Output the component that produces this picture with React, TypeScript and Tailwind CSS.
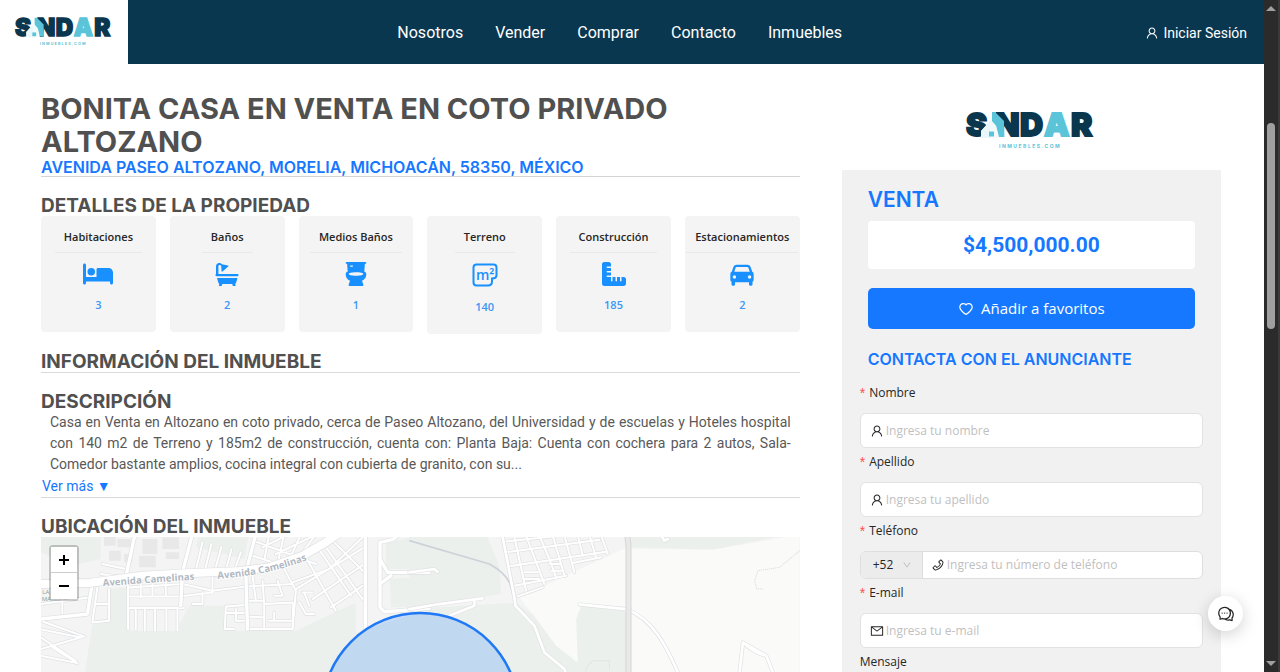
import type { ReactNode } from "react";
import { AiOutlineUser, AiOutlinePhone, AiOutlineMail, AiOutlineHeart, AiOutlineComment, AiOutlineDown } from "react-icons/ai";
import { FaBed, FaRulerCombined } from "react-icons/fa6";
import { BiSolidCar } from "react-icons/bi";

const heading = "font-['Inter',sans-serif] font-bold uppercase text-[#505050]";

function Logo({ className }: { className: string }) {
  return (
    <svg viewBox="0 0 130 40" className={className} role="img" aria-label="Sindar Inmuebles.com">
      <g fontFamily="Inter, sans-serif" fontWeight="900" fontSize="32" fill="#0a364e" stroke="#0a364e" strokeWidth="1.8">
        <text x="0" y="25">S</text>
        <text x="29" y="25">N</text>
        <text x="54" y="25">D</text>
        <text x="78" y="25" fill="#5bc4d8" stroke="#5bc4d8">A</text>
        <text x="105" y="25">R</text>
      </g>
      <path d="M26 1 L29 1 L38 10 V26 L26 13 Z" fill="#5bc4d8" />
      <path d="M15 20 L25 9 L33 18 V27 H15 Z" fill="#f4fafc" />
      <path d="M15 20 L24 10 V27 H15 Z" fill="#e9f6fa" />
      <path d="M30 14 L38 20 V26 H33 Z" fill="#5bc4d8" />
      <rect x="23" y="20.500" width="5" height="5" fill="#5bc4d8" />
      <text x="33" y="37" fontFamily="Inter, sans-serif" fontWeight="700" fontSize="5" letterSpacing="1.5" fill="#5bc4d8">INMUEBLES.COM</text>
    </svg>
  );
}

function BathIcon() {
  return (
    <svg viewBox="0 0 24 24" className="size-6" fill="currentColor">
      <path d="M1 12V4.500C1 2.500 2.300 1 4.200 1c1.200 0 2 .5 2.600 1.300L13 3.500c.5.200.6.700.2 1L7.500 9.500c-.5.300-1 .1-1-.5l-.2-4.500C6.200 3.700 5.500 3 4.600 3 3.700 3 3.400 3.600 3.400 4.500V12H22.500c.8 0 1 .4 1 1s-.3 1.200-1 1.200H1.500c-.8 0-1-.5-1-1.100S.7 12 1 12Z" />
      <path d="M2 16h20.500l-1.300 4.500c-.2.700-.6 1-1 1.200l.4 2.300h-2.800l-.5-2H7.200l-.5 2H3.900l.4-2.300c-.5-.2-.8-.6-1-1.200Z" />
    </svg>
  );
}

function ToiletIcon() {
  return (
    <svg viewBox="0 0 24 24" className="size-6" fill="currentColor" fillRule="evenodd">
      <path d="M2.500 0h19c.6 0 .8.300.8.900s-.2.900-.8.900h-.6l-.6 7.700c1.400.6 2 1.500 2 2.700 0 3-1.700 5.400-4.300 6.600l1.300 3.700c.3.800 0 1.500-.9 1.500H5.600c-.9 0-1.200-.7-.9-1.500L6 18.800c-2.600-1.200-4.300-3.600-4.300-6.600 0-1.200.6-2.100 2-2.700L3.100 1.800h-.6c-.6 0-.8-.3-.8-.9S1.900 0 2.500 0Zm3.700 3.600v1.200h2.600V3.600ZM12 10.300c-4.200 0-7.200.8-7.200 1.700s3 1.700 7.200 1.700 7.200-.8 7.200-1.700-3-1.700-7.200-1.700Z" />
    </svg>
  );
}

function AreaIcon() {
  return (
    <svg viewBox="0 0 26 26" className="size-[26px]" fill="none" stroke="currentColor">
      <path d="M4.500 2.500h17c2 0 3 1 3 3V13c0 2.500-1 3.500-4.500 3.500v3c0 3-1.200 4-4 4H4.500c-2 0-3-1-3-3v-15c0-2 1-3 3-3Z" strokeWidth="2" />
      <text x="4" y="18" fontFamily="Open Sans, sans-serif" fontWeight="600" fontSize="14" fill="currentColor" stroke="none">m²</text>
    </svg>
  );
}

const details: { label: string; value: string; icon: ReactNode }[] = [
  { label: "Habitaciones", value: "3", icon: <FaBed className="h-6 w-[30px]" /> },
  { label: "Baños", value: "2", icon: <BathIcon /> },
  { label: "Medios Baños", value: "1", icon: <ToiletIcon /> },
  { label: "Terreno", value: "140", icon: <AreaIcon /> },
  { label: "Construcción", value: "185", icon: <FaRulerCombined className="size-6" /> },
  { label: "Estacionamientos", value: "2", icon: <BiSolidCar className="-my-[2px] size-7" /> },
];

/* Streets are drawn at three units per pixel. */
const streets = [
  "M35 225 L180 222 L340 200 L470 193 L620 187 L720 175 L820 140 L890 100 L925 75",
];
const avenues = [
  "M490 75 L460 190 L455 290",
  "M680 75 L650 190 L655 360",
  "M318 75 L290 205",
  "M1008 75 V360",
  "M190 220 L175 315 L35 330",
  "M1110 75 L1090 92 L1052 100 V295 L1065 308 L1200 298",
  "M1052 150 L1075 190 H1200",
  "M1052 225 L1085 200",
];
const lanes = [
  "M520 100 L500 185 M547 105 L527 185 M577 113 L557 185 M607 120 L590 185 M635 130 L617 182",
  "M680 98 L860 165 M670 140 L745 165 M720 75 L706 150 M765 75 L745 165 M815 75 L775 165 M860 75 L810 145 M700 115 L780 75 M740 135 L850 82",
  "M830 145 L920 305 M865 115 L965 260 M880 100 L1000 270 M905 90 L1005 190",
  "M800 240 L1005 115 M850 270 L1005 165 M905 295 L1000 230 M790 220 L900 180 L1005 80",
  "M297 215 V360 M335 212 V265 M370 205 V260 M410 205 V260",
  "M297 235 L460 225 L550 245 L655 232 L790 225 M297 262 H450 L550 250 M297 297 H465",
  "M320 300 V362 M347 300 V365 M378 300 V365 M412 300 V365 M445 300 V365",
  "M100 270 V315 M35 285 L180 265 M205 235 L190 340 L240 335 V240 M200 285 H240",
  "M520 250 V285 H490 M550 205 V250 M590 292 L650 288 M590 292 L587 360 H615 M620 300 V335 H650 M590 312 H645",
  "M655 322 L705 325 M705 285 V360 M655 360 H790 L792 285 M700 215 L705 285 L790 280 M745 215 L760 260 H735 M760 170 L800 245 L790 360",
  "M720 335 H785 M735 310 V335 M670 200 L680 275 M660 275 H705 M810 280 L830 315 H855 M825 250 L840 290 M850 250 L820 250",
  "M35 335 L165 382 L35 420 M35 385 L140 455 M70 415 L145 462 L35 440 M35 360 L155 385",
  "M220 165 L290 180 M215 195 L290 205",
];
const eastRoads = [
  "M278 75 L315 265 L318 290 L375 350 L405 430 L465 480 L500 570",
  "M510 286 L650 300 C730 330 770 410 805 490 L830 570",
  "M0 190 L75 180 L85 188 M0 300 L90 285 L220 268 M195 275 V290 L120 320",
  "M990 490 L1000 400 L1070 440 L1090 490 M1000 400 C1025 425 1045 435 1070 440",
  "M755 80 L765 95 L775 90",
];
const eastLanes = [
  "M285 98 L435 82 M290 130 L570 92 M300 172 L590 128 M490 162 L575 145 M315 230 L470 200 M325 262 L400 235",
  "M315 85 L350 245 M350 80 L405 225 M390 80 L420 150 L440 205 M430 80 L465 200 M465 80 L495 190 M505 80 L520 140 M540 80 L560 145 M575 80 L595 135",
  "M345 190 H385 M345 210 H390 M420 165 H450 M425 185 H455",
];

function Roads({ paths, width }: { paths: string[]; width: number }) {
  return (
    <g fill="none" strokeLinecap="round" strokeLinejoin="round">
      {paths.map((d) => <path key={d} d={d} stroke="#dfe0e2" strokeWidth={width + 4} />)}
      {paths.map((d) => <path key={d} d={d} stroke="#ffffff" strokeWidth={width} />)}
    </g>
  );
}

function MapView() {
  return (
    <div className="relative h-40 overflow-hidden bg-[#f5f5f5]">
      <svg viewBox="0 0 758 160" preserveAspectRatio="xMinYMin slice" className="block size-full" role="img" aria-label="Mapa de ubicación">
        <rect width="758" height="160" fill="#f4f4f4" />
        <g transform="translate(-12 -28) scale(0.33333)">
          <path d="M240 240 L295 235 V365 H440 L480 290 H590 V365 H800 L980 280 V370 L1140 320 V570 H155 L190 345 L240 340Z" fill="#ebf0ed" />
          <path d="M510 75 H660 L645 150 L500 115Z M35 75 H215 V150 L130 170 L35 130Z M1070 180 V100 L1200 75 V180Z M1080 210 L1200 200 V290 L1085 295Z" fill="#ebf0ed" />
          <path d="M225 80 h35 v30 h-35z M265 90 h40 v25 h-40z M240 125 h35 v30 h-35z M340 90 h45 v45 h-45z M330 140 h50 v35 h-50z M400 85 h50 v35 h-50z M410 130 h40 v20 h-40z M285 135 h25 v25 h-25z" fill="#e8e8e8" />
          <g transform="translate(1140 0)">
            <path d="M0 75 H230 L270 170 L275 255 L0 300Z M0 300 L320 280 L400 340 L500 460 L500 320 L520 285 H655 V570 H0Z M665 75 H1140 L910 122 L665 115Z" fill="#ebf0ed" />
            <path d="M330 265 L640 120 L910 122 L1170 78 V570 H665 V300 L515 290 L500 330 L505 460 L440 410 L370 315Z" fill="#fafaf9" />
            <path d="M0 95 L240 165 Q285 190 300 220 L318 280" fill="none" stroke="#cdd2d8" strokeWidth="5" />
            <path d="M1170 125 L1110 175 L1045 185 L1035 215 L1042 240 H1062 M530 490 V475 L550 455 H600 V480" fill="none" stroke="#d8d8d8" strokeWidth="3" strokeDasharray="3 3" />
          </g>
          <Roads paths={lanes} width={6} />
          <Roads paths={avenues} width={10} />
          <Roads paths={streets} width={24} />
          <g transform="translate(1140 0)">
            <Roads paths={eastLanes} width={6} />
            <Roads paths={eastRoads} width={8} />
            <path d="M653 75 L657 110 V570" fill="none" stroke="#d6d6d6" strokeWidth="18" />
            <path d="M653 75 L657 110 V570" fill="none" stroke="#e9e9e9" strokeWidth="12" />
          </g>
          <path id="camelinas-west" d="M222 232 Q370 220 530 210" fill="none" />
          <path id="camelinas-east" d="M565 209 Q730 200 870 138" fill="none" />
          <g fontFamily="Open Sans, sans-serif" fontWeight="700" fontSize="29" fill="#b0b8c2" stroke="#ffffff" strokeWidth="5" paintOrder="stroke">
            <text><textPath href="#camelinas-west">Avenida Camelinas</textPath></text>
            <text><textPath href="#camelinas-east">Avenida Camelinas</textPath></text>
          </g>
          <g fontFamily="Open Sans, sans-serif" fontSize="18" fill="#8ba394">
            <text x="40" y="254">LA</text>
            <text x="38" y="275">MA</text>
          </g>
        </g>
        <circle cx="379" cy="174" r="98" fill="#1677ff" fillOpacity="0.2" stroke="#1f78f5" strokeWidth="2.500" />
      </svg>
      <div className="absolute top-2 left-2 flex flex-col rounded-sm border-2 border-black/20 bg-clip-padding">
        <button aria-label="Acercar" className="flex h-[26px] w-[26px] items-center justify-center border-b border-[#ccc] bg-white">
          <svg viewBox="0 0 12 12" className="size-3" stroke="black" strokeWidth="2"><path d="M1 6H11M6 1V11" /></svg>
        </button>
        <button aria-label="Alejar" className="flex h-[26px] w-[26px] items-center justify-center bg-white">
          <svg viewBox="0 0 12 12" className="size-3" stroke="black" strokeWidth="2"><path d="M1 6H11" /></svg>
        </button>
      </div>
    </div>
  );
}

function Label({ id, children }: { id: string; children: ReactNode }) {
  return (
    <label htmlFor={id} className="mt-[3px] mb-[9px] flex h-[22px] items-center text-xs">
      <span className="mr-1 font-['Liberation_Sans',sans-serif] text-sm text-[#ff4d4f]">*</span>
      {children}
    </label>
  );
}

function Field({ id, label, placeholder, icon }: { id: string; label: string; placeholder: string; icon: ReactNode }) {
  return (
    <div>
      <Label id={id}>{label}</Label>
      <div className="flex h-[35px] items-center gap-[2px] rounded-md border border-[#e2e2e2] bg-white px-[9px]">
        {icon}
        <input id={id} placeholder={placeholder} className="min-w-0 flex-1 bg-transparent text-xs outline-none placeholder:text-[#bfbfbf]" />
      </div>
    </div>
  );
}

export default function App() {
  return (
    <div className="flex h-screen overflow-hidden bg-white font-['Open_Sans',sans-serif] text-[#262626]">
      <div className="min-w-0 flex-1">
        <header className="flex h-16 items-stretch bg-[#0a3750] font-['Roboto',sans-serif] text-white">
          <a href="#inicio" className="flex w-32 items-center justify-center bg-white">
            <Logo className="w-[98px] overflow-visible" />
          </a>
          <nav className="flex flex-1 items-center justify-center gap-8 pt-[2px] text-base">
            <a href="#nosotros">Nosotros</a>
            <a href="#vender">Vender</a>
            <a href="#comprar">Comprar</a>
            <a href="#contacto">Contacto</a>
            <a href="#inmuebles">Inmuebles</a>
          </nav>
          <a href="#sesion" className="flex items-center gap-1 pt-[2px] pr-[17px] pl-[34px] text-sm">
            <AiOutlineUser className="size-[14px]" />
            Iniciar Sesión
          </a>
        </header>

        <main className="flex items-start gap-[42px] pr-[43px] pl-[41px]">
          <div className="min-w-0 flex-2 pt-7">
            <h1 className={`${heading} text-[29px] leading-[33px]`}>Bonita casa en venta en coto privado Altozano</h1>
            <p className="border-b border-[#d4d4d4] font-['Inter',sans-serif] text-base leading-[18px] font-semibold text-[#1677ff] uppercase">
              Avenida Paseo Altozano, Morelia, Michoacán, 58350, México
            </p>

            <h2 className={`${heading} mt-[19px] text-[19px] leading-[19px]`}>Detalles de la propiedad</h2>
            <div className="mt-px grid grid-cols-6 items-start gap-[14px]">
              {details.map((d) => (
                <div key={d.label} className="flex flex-col items-center rounded bg-[#f4f4f4] pt-[11px] pb-[17px]">
                  <h3 className="border-b border-[#e9e9e9] px-[9px] pb-[5px] text-[11px] leading-5 font-semibold whitespace-nowrap">{d.label}</h3>
                  <div className="mt-[9px] flex items-center text-[#1890ff]">{d.icon}</div>
                  <span className="mt-[9px] text-[11px] leading-5 font-semibold text-[#3a97f5]">{d.value}</span>
                </div>
              ))}
            </div>

            <h2 className={`${heading} mt-[18px] border-b border-[#d9d9d9] text-[19px] leading-5`}>Información del inmueble</h2>

            <section className="mt-[19px] border-b border-[#d9d9d9] font-['Roboto',sans-serif] text-sm">
              <h2 className={`${heading} text-[19px] leading-5`}>Descripción</h2>
              <p className="px-[9px] text-justify leading-[21px] text-[#595959]">
                Casa en Venta en Altozano en coto privado, cerca de Paseo Altozano, del Universidad y de escuelas y Hoteles hospital con 140 m2 de Terreno y 185m2 de construcción, cuenta con: Planta Baja: Cuenta con cochera para 2 autos, Sala-Comedor bastante amplios, cocina integral con cubierta de granito, con su...
              </p>
              <button className="block px-px leading-[22px] text-[#1677ff]">Ver más ▼</button>
            </section>

            <h2 className={`${heading} mt-[19px] text-[19px] leading-5`}>Ubicación del inmueble</h2>
            <MapView />
          </div>

          <aside className="min-w-0 flex-1">
            <div className="flex h-[106px] justify-center pt-[47px]">
              <Logo className="h-10 w-[130px] overflow-visible" />
            </div>
            <div className="bg-[#f1f1f1] px-[18px] pt-[18px]">
              <div className="px-2">
                <h2 className="font-['Inter',sans-serif] text-[21px] leading-6 font-semibold text-[#1677ff]">VENTA</h2>
                <p className="mt-[9px] rounded bg-white text-center font-['Roboto',sans-serif] text-[21px] leading-[48px] font-bold text-[#1677ff]">$4,500,000.00</p>
                <button className="mt-[19px] flex h-[41px] w-full items-center justify-center gap-[7px] rounded-[5px] bg-[#1677ff] text-[15px] text-white">
                  <AiOutlineHeart className="size-4" />
                  Añadir a favoritos
                </button>
                <h2 className="mt-5 font-['Inter',sans-serif] text-base leading-5 font-semibold text-[#1677ff]">CONTACTA CON EL ANUNCIANTE</h2>
              </div>
              <form className="mt-[13px]">
                <Field id="nombre" label="Nombre" placeholder="Ingresa tu nombre" icon={<AiOutlineUser className="size-[14px]" />} />
                <Field id="apellido" label="Apellido" placeholder="Ingresa tu apellido" icon={<AiOutlineUser className="size-[14px]" />} />
                <Label id="telefono">Teléfono</Label>
                <div className="flex h-7 items-stretch overflow-hidden rounded-md border border-[#dedede] bg-white">
                  <div className="flex w-[62px] items-center justify-between border-r border-[#dedede] bg-[#ececec] pr-[10px] pl-3">
                    <select aria-label="Prefijo" className="appearance-none bg-transparent text-xs outline-none">
                      <option>+52</option>
                    </select>
                    <AiOutlineDown className="size-[10px] text-[#b5b5b5]" />
                  </div>
                  <div className="flex flex-1 items-center gap-[2px] px-2">
                    <AiOutlinePhone className="size-[14px]" />
                    <input id="telefono" placeholder="Ingresa tu número de teléfono" className="min-w-0 flex-1 bg-transparent text-xs outline-none placeholder:text-[#bfbfbf]" />
                  </div>
                </div>
                <Field id="email" label="E-mail" placeholder="Ingresa tu e-mail" icon={<AiOutlineMail className="size-[14px]" />} />
                <label htmlFor="mensaje" className="mt-[3px] mb-[9px] flex h-[22px] items-center text-xs">Mensaje</label>
                <textarea id="mensaje" className="block h-24 w-full rounded-md border border-[#dedede] bg-white" />
              </form>
            </div>
          </aside>
        </main>

        <button aria-label="Abrir chat" className="fixed top-[596px] right-[37px] flex size-[35px] items-center justify-center rounded-full bg-white shadow-[0_4px_16px_rgba(0,0,0,0.18)]">
          <AiOutlineComment className="size-[18px]" />
        </button>
      </div>

      <div aria-hidden="true" className="flex w-4 shrink-0 flex-col items-center justify-between border-r-2 border-[#3a3a3a] bg-[#2b2b2b] py-[5px]">
        <svg viewBox="0 0 10 6" className="h-[6px] w-[10px]" fill="#a0a0a0"><path d="M0 6L5 1L10 6Z" /></svg>
        <div className="flex w-full flex-1 flex-col items-center pt-[112px]">
          <div className="h-[206px] w-2 rounded-full bg-[#9f9f9f]" />
        </div>
        <svg viewBox="0 0 10 6" className="h-[6px] w-[10px]" fill="#a0a0a0"><path d="M0 0L5 5L10 0Z" /></svg>
      </div>
    </div>
  );
}
